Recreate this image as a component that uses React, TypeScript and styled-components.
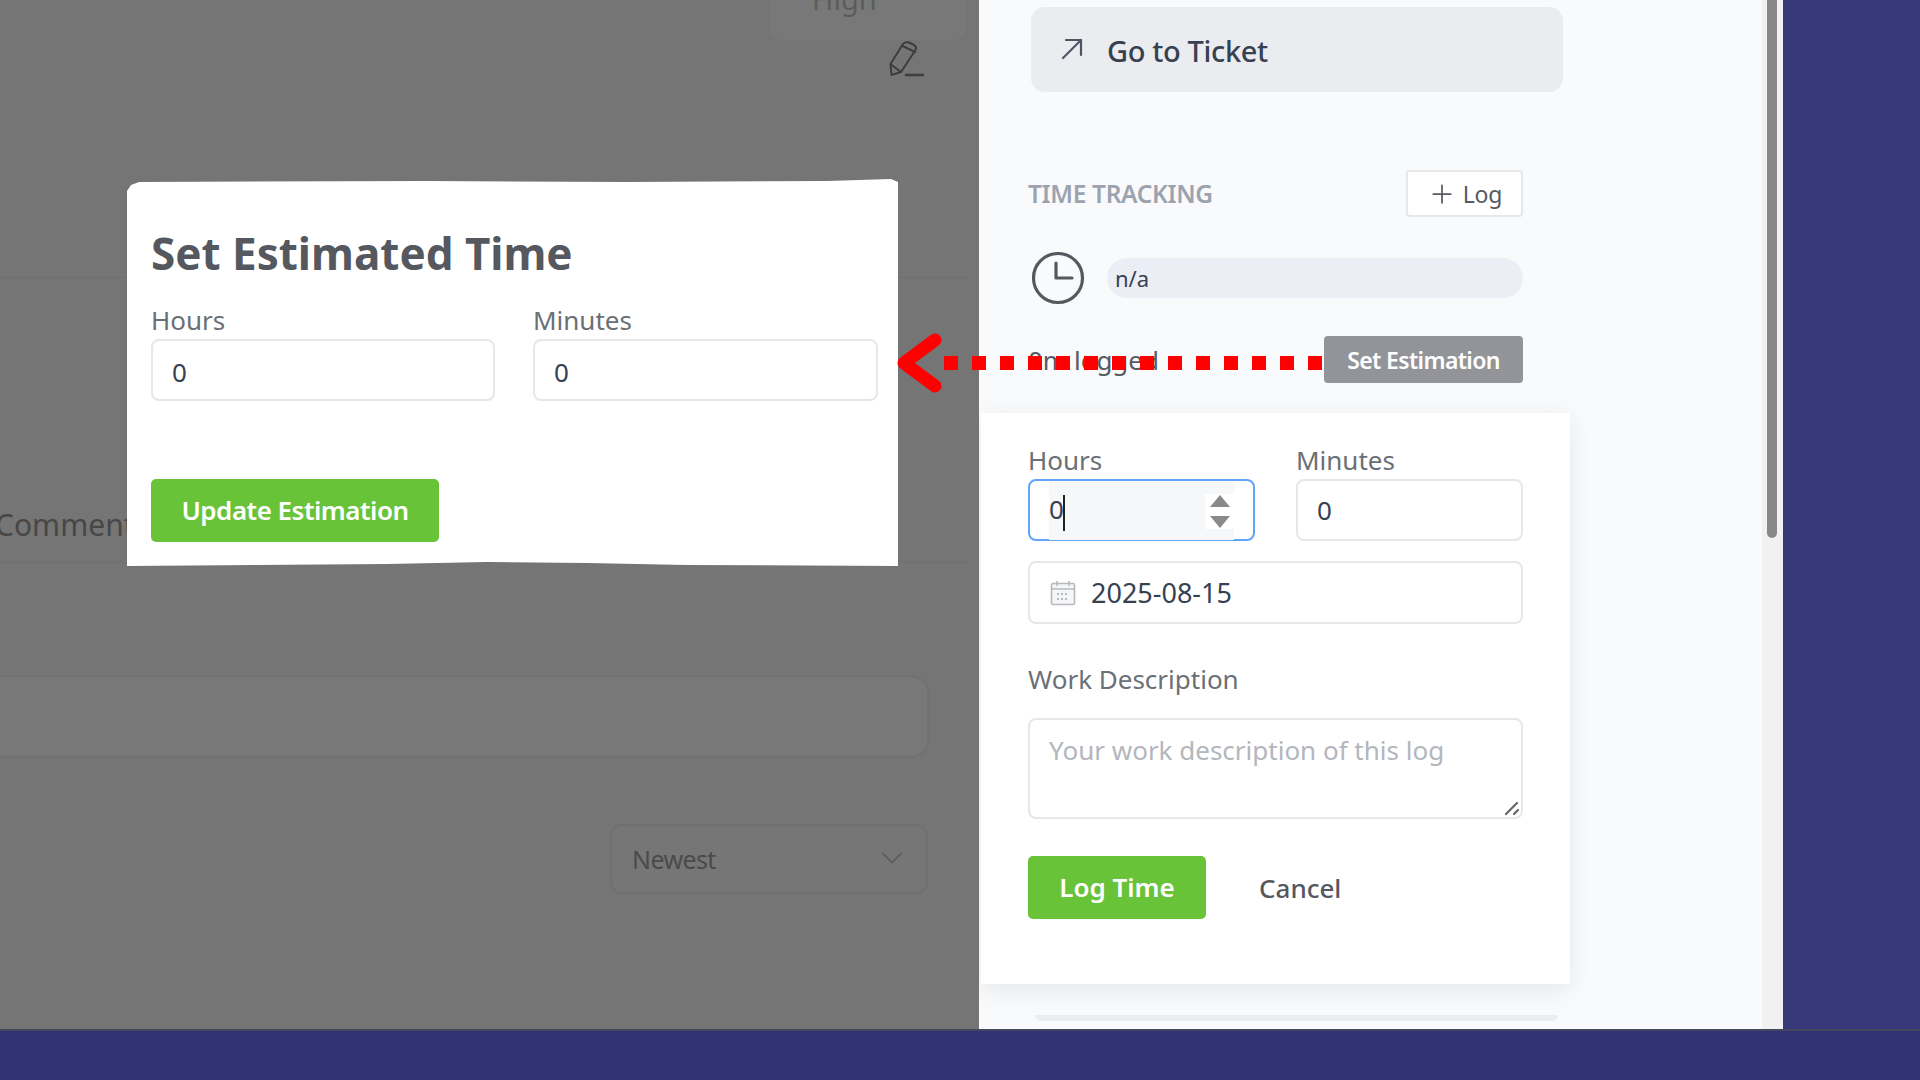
import React from "react";
import styled, { createGlobalStyle } from "styled-components";
import { Plus, ChevronDown } from "lucide-react";

const Global = createGlobalStyle`
  html, body { margin: 0; padding: 0; overflow: hidden; }
  * { box-sizing: border-box; }
  body { font-family: "Noto Sans", "Open Sans", sans-serif; }
`;

const Page = styled.div`
  position: relative;
  width: 1920px;
  height: 1080px;
  overflow: hidden;
  background: #303273;
`;
const Backdrop = styled.div`
  display: flex;
  height: 1031px;
  background: #363878;
  border-bottom: 2px solid #45475f;
`;
const Dimmed = styled.div`
  width: 979px;
  flex: none;
  background: #757575;
  overflow: hidden;
  display: flex;
  flex-direction: column;
`;
const PriorityPill = styled.div`
  margin-left: 769px;
  width: 197px;
  height: 40px;
  flex: none;
  background: #787878;
  border-radius: 0 0 14px 14px;
  padding-left: 43px;
  color: #5c5c5c;
  font-size: 29px;
  line-height: 20px;
  overflow: hidden;
  & > span { display: block; margin-top: -11px; }
`;
const PencilRow = styled.div`
  display: flex;
  justify-content: flex-end;
  padding-right: 55px;
  height: 38px;
  flex: none;
`;
const Rule = styled.div<{ $top: number }>`
  margin-top: ${(p) => p.$top}px;
  width: 970px;
  height: 1px;
  flex: none;
  background: #6f6f6f;
`;
const CommentTitle = styled.div`
  margin: 225px 0 0 -5px;
  height: 44px;
  flex: none;
  font-size: 30px;
  line-height: 44px;
  color: #474747;
  white-space: nowrap;
`;
const CommentBox = styled.div`
  margin: 112px 0 0 -30px;
  width: 959px;
  height: 83px;
  flex: none;
  border: 2px solid #717171;
  border-radius: 18px;
  background: #787878;
`;
const SortSelect = styled.div`
  margin: 66px 0 0 610px;
  width: 318px;
  height: 70px;
  flex: none;
  border: 2px solid #707070;
  border-radius: 12px;
  background: #767676;
  display: flex;
  align-items: center;
  justify-content: space-between;
  padding: 0 16px 0 20px;
  color: #4a4a4a;
  font-size: 25px;
  letter-spacing: -0.6px;
  & > svg { margin-top: -3px; color: #5a5a5a; }
`;

const Panel = styled.div`
  width: 804px;
  flex: none;
  display: flex;
  background: #f9fafb;
  color: #4b4e55;
`;
const PanelBody = styled.div`
  width: 783px;
  flex: none;
  padding-top: 7px;
  overflow: hidden;
`;
const ScrollTrack = styled.div`
  width: 21px;
  flex: none;
  background: #f1f1f1;
  padding: 0 5px;
`;
const ScrollThumb = styled.div`
  width: 10px;
  height: 538px;
  background: #888888;
  border-radius: 0 0 5px 5px;
`;
const TicketLink = styled.div`
  margin-left: 52px;
  width: 532px;
  height: 85px;
  background: #ebecef;
  border-radius: 14px;
  display: flex;
  align-items: center;
  gap: 24px;
  padding: 2px 0 0 30px;
  font-size: 29px;
  font-weight: 500;
  letter-spacing: -0.35px;
  color: #374151;
  & > svg { margin-top: -4px; }
`;
const SectionHead = styled.div`
  margin: 78px 0 0 49px;
  width: 495px;
  display: flex;
  align-items: center;
  justify-content: space-between;
`;
const SectionLabel = styled.div`
  font-size: 24.5px;
  font-weight: 600;
  color: #9ca3af;
  letter-spacing: -0.35px;
`;
const LogButton = styled.div`
  width: 117px;
  height: 47px;
  background: #fff;
  border: 2px solid #e5e7eb;
  border-radius: 4px;
  display: flex;
  align-items: center;
  justify-content: center;
  gap: 6px;
  font-size: 23px;
  letter-spacing: -0.2px;
  color: #565a62;
`;
const EstimateRow = styled.div`
  margin: 34px 0 0 52px;
  width: 492px;
  display: flex;
  align-items: center;
  gap: 22px;
`;
const EstimatePill = styled.div`
  flex: 1;
  height: 40px;
  border-radius: 20px;
  background: #eceef5;
  padding-left: 8px;
  line-height: 40px;
  font-size: 22px;
  color: #374151;
`;
const LoggedRow = styled.div`
  margin: 31px 0 0 49px;
  width: 495px;
  display: flex;
  align-items: center;
  justify-content: space-between;
`;
const LoggedText = styled.div`
  font-size: 26px;
  color: #565a62;
`;
const SetButton = styled.div`
  width: 199px;
  height: 47px;
  background: #92949a;
  border-radius: 4px;
  color: #fff;
  font-size: 23px;
  font-weight: 600;
  letter-spacing: -0.65px;
  display: flex;
  align-items: center;
  justify-content: center;
`;
const Card = styled.div`
  margin: 30px 0 0 2px;
  width: 589px;
  height: 571px;
  background: #fff;
  padding: 30px 0 0 47px;
  box-shadow: 0 6px 24px rgba(0, 0, 0, 0.08);
`;
const FieldGrid = styled.div<{ $a: number; $b: number; $gap: number }>`
  display: grid;
  grid-template-columns: ${(p) => p.$a}px ${(p) => p.$b}px;
  column-gap: ${(p) => p.$gap}px;
`;
const Field = styled.div`
  display: flex;
  flex-direction: column;
  gap: 2px;
`;
const Label = styled.div`
  height: 34px;
  line-height: 34px;
  font-size: 26px;
  color: #6b6f76;
`;
const ValueBox = styled.div<{ $drop?: number }>`
  height: 62px;
  background: #fff;
  border: 2px solid #e5e7eb;
  border-radius: 8px;
  padding: ${(p) => p.$drop ?? 0}px 0 0 19px;
  display: flex;
  align-items: center;
  font-size: 26px;
  color: #374151;
`;
const FocusBox = styled.div`
  position: relative;
  height: 62px;
  background: #fff;
  border: 2px solid #60a5fa;
  border-radius: 8px;
  padding: 1px 18px 1px 19px;
  display: flex;
`;
const FocusInner = styled.div`
  width: 185px;
  height: 58px;
  background: #f6f7f9;
  display: flex;
  align-items: center;
  justify-content: space-between;
  font-size: 26px;
  color: #374151;
`;
const Caret = styled.span`
  display: inline-block;
  width: 2px;
  height: 36px;
  background: #222;
  margin-left: -1px;
  vertical-align: middle;
`;
const Spinner = styled.div`
  width: 29px;
  height: 35px;
  background: #fff;
  display: flex;
  flex-direction: column;
  align-items: center;
  justify-content: center;
`;
const DateBox = styled(ValueBox)`
  margin-top: 20px;
  width: 495px;
  height: 63px;
  gap: 15px;
  padding-left: 20px;
  font-size: 27px;
`;
const WorkLabel = styled(Label)`
  margin-top: 38px;
`;
const TextBox = styled.div`
  position: relative;
  margin-top: 22px;
  width: 495px;
  height: 101px;
  background: #fff;
  border: 2px solid #e5e7eb;
  border-radius: 8px;
  padding: 12px 0 0 19px;
  font-size: 26px;
  color: #b3b6bc;
`;
const ResizeGrip = styled.svg`
  position: absolute;
  right: 0;
  bottom: 0;
`;
const Actions = styled.div`
  margin-top: 37px;
  display: flex;
  align-items: center;
  gap: 53px;
`;
const GreenButton = styled.div<{ $w: number; $track: number }>`
  width: ${(p) => p.$w}px;
  height: 63px;
  padding-bottom: 2px;
  background: #69c339;
  border-radius: 5px;
  color: #fff;
  font-size: 26px;
  font-weight: 600;
  letter-spacing: ${(p) => p.$track}px;
  display: flex;
  align-items: center;
  justify-content: center;
`;
const CancelText = styled.div`
  font-size: 26px;
  font-weight: 500;
  color: #55585e;
`;
const CutLine = styled.div`
  margin: 31px 0 0 56px;
  width: 523px;
  height: 6px;
  background: #ecedee;
  border-radius: 0 0 10px 10px;
`;

const Modal = styled.div`
  position: absolute;
  left: 127px;
  top: 179px;
  width: 771px;
  height: 388px;
  background: #fff;
  padding: 44px 0 0 24px;
  color: #55585e;
  clip-path: polygon(0 12px, 4px 6px, 12px 3px, 300px 2px, 500px 3px, 700px 2px, 764px 0, 771px 3px, 771px 387px, 560px 386px, 460px 384px, 360px 383px, 260px 385px, 0 387px);
`;
const ModalTitle = styled.div`
  height: 60px;
  line-height: 60px;
  font-size: 44px;
  font-weight: 700;
  color: #55585e;
  margin-bottom: 20px;
`;
const ModalAction = styled.div`
  margin-top: 78px;
`;
const ArrowOverlay = styled.svg`
  position: absolute;
  left: 890px;
  top: 325px;
`;

const Pencil = () => (
  <svg width="36" height="38" viewBox="0 0 36 38" fill="none" stroke="#3d3d3d" strokeWidth="2" strokeLinejoin="round" strokeLinecap="round">
    <path d="M2.5 24 L15 4 Q17 1.5 21 2.5 L26 5 Q29 7 27.5 10 L13 32 L3.5 35 Z" />
    <path d="M14.5 6 L27 12" />
    <path d="M3 24.5 L13 32" />
    <path d="M18 35 H35" strokeWidth="2.6" />
  </svg>
);
const TicketArrow = () => (
  <svg width="22" height="22" viewBox="0 0 22 22" fill="none" stroke="#4b5563" strokeWidth="2.2" strokeLinecap="round" strokeLinejoin="round">
    <path d="M2 20 L20 2" />
    <path d="M5 2 H20 V17" />
  </svg>
);
const Clock = () => (
  <svg width="54" height="54" viewBox="0 0 54 54" fill="none" stroke="#55585e" strokeWidth="3.2" strokeLinecap="round" strokeLinejoin="round">
    <circle cx="27" cy="27" r="24.5" />
    <path d="M25 12 V27 H41" />
  </svg>
);
const Calendar = () => (
  <svg width="26" height="26" viewBox="0 0 26 26" fill="none" stroke="#b7b9be" strokeWidth="1.6">
    <rect x="1.5" y="3.5" width="23" height="21" rx="1.5" fill="#f5f6f7" />
    <path d="M1.5 9 H24.5 M7 1 V6 M19 1 V6" />
    <path d="M7 14 H19 M7 19 H19" strokeWidth="2" strokeDasharray="2 2" />
  </svg>
);
const SpinTriangles = () => (
  <svg width="20" height="33" viewBox="0 0 20 33" fill="#8a8a8a">
    <path d="M10 0 L20 12 H0 Z" />
    <path d="M0 21 H20 L10 33 Z" />
  </svg>
);

export default function App() {
  return (
    <Page>
      <Global />
      <Backdrop>
        <Dimmed>
          <PriorityPill><span>High</span></PriorityPill>
          <PencilRow><Pencil /></PencilRow>
          <Rule $top={199} />
          <CommentTitle>Comments</CommentTitle>
          <Rule $top={15} />
          <CommentBox />
          <SortSelect>
            Newest
            <ChevronDown size={36} strokeWidth={1.1} />
          </SortSelect>
        </Dimmed>
        <Panel>
          <PanelBody>
            <TicketLink>
              <TicketArrow />
              Go to Ticket
            </TicketLink>
            <SectionHead>
              <SectionLabel>TIME TRACKING</SectionLabel>
              <LogButton>
                <Plus size={30} strokeWidth={1.4} />
                Log
              </LogButton>
            </SectionHead>
            <EstimateRow>
              <Clock />
              <EstimatePill>n/a</EstimatePill>
            </EstimateRow>
            <LoggedRow>
              <LoggedText>0m logged</LoggedText>
              <SetButton>Set Estimation</SetButton>
            </LoggedRow>
            <Card>
              <FieldGrid $a={227} $b={227} $gap={41}>
                <Field>
                  <Label>Hours</Label>
                  <FocusBox>
                    <FocusInner>
                      <span>0<Caret /></span>
                      <Spinner><SpinTriangles /></Spinner>
                    </FocusInner>
                  </FocusBox>
                </Field>
                <Field>
                  <Label>Minutes</Label>
                  <ValueBox>0</ValueBox>
                </Field>
              </FieldGrid>
              <DateBox>
                <Calendar />
                2025-08-15
              </DateBox>
              <WorkLabel>Work Description</WorkLabel>
              <TextBox>
                Your work description of this log
                <ResizeGrip width="18" height="18" viewBox="0 0 18 18" stroke="#666" strokeWidth="2.2" strokeLinecap="round">
                  <path d="M3 15 L14 4 M11 15 L15 11" />
                </ResizeGrip>
              </TextBox>
              <Actions>
                <GreenButton $w={178} $track={0}>Log Time</GreenButton>
                <CancelText>Cancel</CancelText>
              </Actions>
            </Card>
            <CutLine />
          </PanelBody>
          <ScrollTrack><ScrollThumb /></ScrollTrack>
        </Panel>
      </Backdrop>

      <Modal>
        <ModalTitle>Set Estimated Time</ModalTitle>
        <FieldGrid $a={344} $b={345} $gap={38}>
          <Field>
            <Label>Hours</Label>
            <ValueBox $drop={3}>0</ValueBox>
          </Field>
          <Field>
            <Label>Minutes</Label>
            <ValueBox $drop={3}>0</ValueBox>
          </Field>
        </FieldGrid>
        <ModalAction>
          <GreenButton $w={288} $track={-0.5}>Update Estimation</GreenButton>
        </ModalAction>
      </Modal>

      <ArrowOverlay width="440" height="75" viewBox="0 0 440 75" fill="none" stroke="#ff0000">
        <line x1="54" y1="38" x2="432" y2="38" strokeWidth="14" strokeDasharray="14 14" />
        <polyline points="45,15 14,38 45,61" strokeWidth="13" strokeLinecap="round" strokeLinejoin="round" />
      </ArrowOverlay>
    </Page>
  );
}
